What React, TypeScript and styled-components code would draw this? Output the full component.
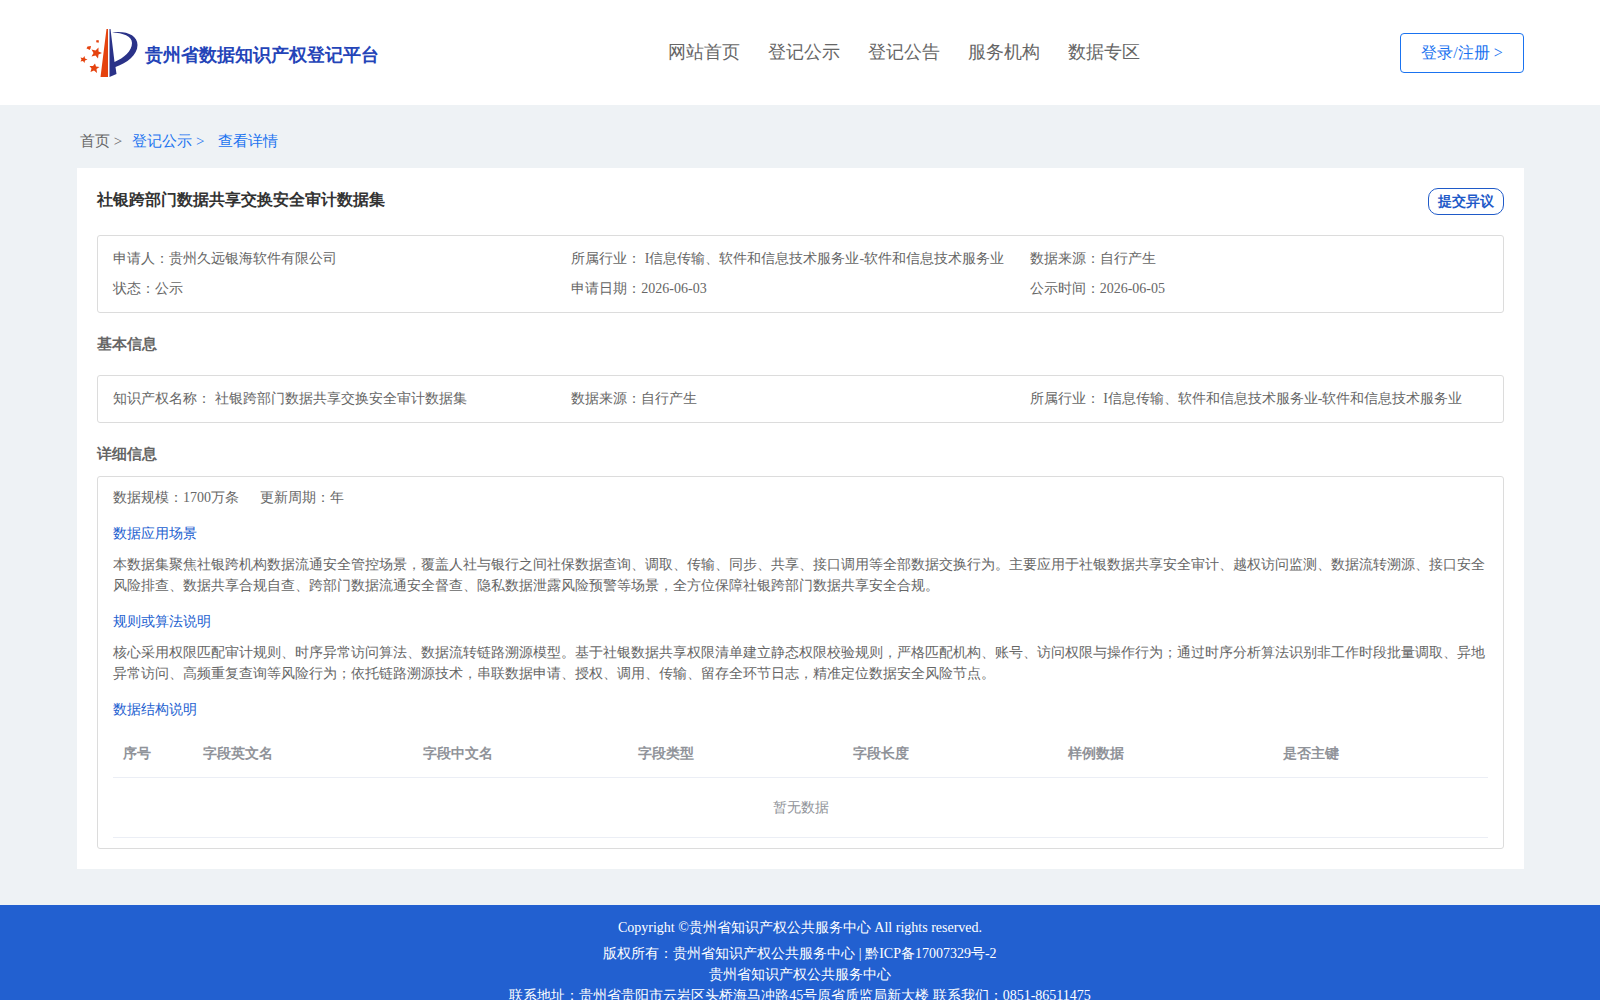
import React from "react";
import styled, { createGlobalStyle } from "styled-components";

const GlobalStyle = createGlobalStyle`
  * { box-sizing: border-box; }
  body {
    margin: 0;
    background: #eef2f5;
    color: #666;
    font-family: "Liberation Serif", serif;
    font-size: 14px;
    line-height: 21px;
  }
  h1, h2, h3, p, dl, dd, dt, ol { margin: 0; padding: 0; }
  a { color: inherit; text-decoration: none; }
  button { font-family: inherit; cursor: pointer; }
`;

const Header = styled.header`
  display: grid;
  grid-template-columns: auto 1fr auto;
  align-items: center;
  height: 105px;
  padding: 0 76px 0 80px;
  background: #fff;
`;

const Brand = styled.a`
  display: flex;
  align-items: center;
  gap: 7px;
  color: #2444b8;
  font-size: 18px;
  font-weight: 700;
  line-height: 24px;
`;

const BrandName = styled.span`
  padding-top: 4px;
`;

const Nav = styled.nav`
  display: flex;
  justify-content: center;
  gap: 28px;
  padding: 0 0 2px 28px;
  font-size: 18px;
  line-height: 24px;
`;

const LoginButton = styled.button`
  min-width: 124px;
  height: 40px;
  padding: 2px 20px 0;
  border: 1px solid #1a73f0;
  border-radius: 4px;
  background: #fff;
  color: #1a73f0;
  font-size: 16px;
`;

const Main = styled.main`
  padding: 0 76px 36px 77px;
`;

const Breadcrumb = styled.nav`
  display: flex;
  gap: 10px;
  align-items: center;
  height: 63px;
  padding: 10px 3px 0;
  font-size: 15px;
`;

const Crumb = styled.a<{ $active?: boolean }>`
  color: ${(p) => (p.$active ? "#1a73f0" : "#666")};
  white-space: pre;
`;

const Card = styled.div`
  padding: 20px;
  background: #fff;
`;

const TitleRow = styled.div`
  display: flex;
  justify-content: space-between;
  align-items: flex-start;
  height: 47px;
`;

const Title = styled.h1`
  color: #333;
  font-size: 16px;
  line-height: 24px;
`;

const ObjectionButton = styled.button`
  height: 27px;
  padding: 0 9px;
  border: 1px solid #1f5ac8;
  border-radius: 10px;
  background: #fff;
  color: #1f5ac8;
  font-size: 14px;
  font-weight: 700;
`;

const Panel = styled.section`
  border: 1px solid #dcdcdc;
  border-radius: 3px;
  padding: 8px 15px;
`;

const InfoGrid = styled.dl`
  display: grid;
  grid-template-columns: repeat(3, 1fr);
  line-height: 30px;
`;

const Field = styled.div`
  display: flex;
  white-space: pre;
`;

const SectionTitle = styled.h2<{ $gap: number }>`
  padding: 20px 0 ${(p) => p.$gap}px;
  font-size: 15px;
  line-height: 22px;
`;

const Detail = styled(Panel)`
  padding: 10px 15px;
`;

const Meta = styled.dl`
  display: flex;
  gap: 21px;
`;

const SubTitle = styled.h3`
  padding: 15px 0 10px;
  color: #2260d0;
  font-size: 14px;
  font-weight: 400;
`;

const Table = styled.table`
  width: 100%;
  border-collapse: separate;
  border-spacing: 0;
  table-layout: fixed;
  color: #909399;
`;

const HeadCell = styled.th<{ $width?: number }>`
  width: ${(p) => (p.$width ? `${p.$width}px` : "auto")};
  height: 48px;
  padding: 0 10px;
  border-bottom: 1px solid #ebeef5;
  text-align: left;
`;

const EmptyCell = styled.td`
  height: 60px;
  padding: 0;
  border-bottom: 1px solid #ebeef5;
  text-align: center;
`;

const Footer = styled.footer`
  padding: 12px 0 20px;
  background: #2260d0;
  color: #fff;
  text-align: center;
`;

const Copyright = styled.p`
  padding-bottom: 5px;
`;

const Logo = () => (
  <svg width="58" height="50" viewBox="0 0 58 50" aria-hidden="true">
    <path d="M26.5 1 L28 1 L28 49 L20.5 49 Z" fill="#e5430f" />
    <path d="M29.5 1 L30.5 1 L34.5 34 C44 30 52 23 52 15 C52 8 43 5 32 4.500 C46 2.500 57.500 7 57.500 17 C57.500 27 47 35 35.500 39 L36.500 46 L29.500 49 Z" fill="#2a3288" />
    <g fill="#e5430f">
      <path d="M18.500 19.500 L18.500 23.500 L22 25 L18.500 26.500 L18 30.500 L15.500 27.500 L11.500 28.500 L13.500 25 L11.500 21.500 L15.500 22.500 Z" />
      <path d="M15 35.500 L16 38.500 L19.500 39 L16.500 41 L17 45 L14 42.500 L10.500 44 L11.500 40.500 L9.500 38 L13 38 Z" />
      <path d="M4.500 28 L5 30.500 L7.500 31.500 L5 32.500 L4.500 35 L3 33 L0.500 33.500 L1.500 31.500 L0.500 29.500 L3 30 Z" />
      <path d="M7.500 18.500 L11 18 L10.500 20.500 L9.500 22 L8 21 L6.500 20.500 Z" />
      <path d="M16 12.500 L18.500 12 L19 14.500 L16.500 14.500 Z" />
    </g>
  </svg>
);

const navItems = ["网站首页", "登记公示", "登记公告", "服务机构", "数据专区"];
const industry = " I信息传输、软件和信息技术服务业-软件和信息技术服务业";

const summary = [
  ["申请人：", "贵州久远银海软件有限公司"],
  ["所属行业：", industry],
  ["数据来源：", "自行产生"],
  ["状态：", "公示"],
  ["申请日期：", "2026-06-03"],
  ["公示时间：", "2026-06-05"],
];

const basics = [
  ["知识产权名称：", " 社银跨部门数据共享交换安全审计数据集"],
  ["数据来源：", "自行产生"],
  ["所属行业：", industry],
];

const columns: { label: string; width?: number }[] = [
  { label: "序号", width: 80 },
  { label: "字段英文名", width: 220 },
  { label: "字段中文名" },
  { label: "字段类型" },
  { label: "字段长度" },
  { label: "样例数据" },
  { label: "是否主键" },
];

const Fields = ({ items }: { items: string[][] }) => (
  <>
    {items.map(([label, value]) => (
      <Field key={label}>
        <dt>{label}</dt>
        <dd>{value}</dd>
      </Field>
    ))}
  </>
);

export default function App() {
  return (
    <>
      <GlobalStyle />
      <Header>
        <Brand href="#">
          <Logo />
          <BrandName>贵州省数据知识产权登记平台</BrandName>
        </Brand>
        <Nav>
          {navItems.map((item) => (
            <a href="#" key={item}>{item}</a>
          ))}
        </Nav>
        <LoginButton type="button">登录/注册 &gt;</LoginButton>
      </Header>
      <Main>
        <Breadcrumb>
          <Crumb href="#">{"首页 >"}</Crumb>
          <Crumb href="#" $active>{"登记公示 > "}</Crumb>
          <Crumb href="#" $active>查看详情</Crumb>
        </Breadcrumb>
        <Card>
          <TitleRow>
            <Title>社银跨部门数据共享交换安全审计数据集</Title>
            <ObjectionButton type="button">提交异议</ObjectionButton>
          </TitleRow>
          <Panel>
            <InfoGrid><Fields items={summary} /></InfoGrid>
          </Panel>
          <SectionTitle $gap={20}>基本信息</SectionTitle>
          <Panel>
            <InfoGrid><Fields items={basics} /></InfoGrid>
          </Panel>
          <SectionTitle $gap={11}>详细信息</SectionTitle>
          <Detail>
            <Meta>
              <Fields items={[["数据规模：", "1700万条"], ["更新周期：", "年"]]} />
            </Meta>
            <SubTitle>数据应用场景</SubTitle>
            <p>本数据集聚焦社银跨机构数据流通安全管控场景，覆盖人社与银行之间社保数据查询、调取、传输、同步、共享、接口调用等全部数据交换行为。主要应用于社银数据共享安全审计、越权访问监测、数据流转溯源、接口安全风险排查、数据共享合规自查、跨部门数据流通安全督查、隐私数据泄露风险预警等场景，全方位保障社银跨部门数据共享安全合规。</p>
            <SubTitle>规则或算法说明</SubTitle>
            <p>核心采用权限匹配审计规则、时序异常访问算法、数据流转链路溯源模型。基于社银数据共享权限清单建立静态权限校验规则，严格匹配机构、账号、访问权限与操作行为；通过时序分析算法识别非工作时段批量调取、异地异常访问、高频重复查询等风险行为；依托链路溯源技术，串联数据申请、授权、调用、传输、留存全环节日志，精准定位数据安全风险节点。</p>
            <SubTitle>数据结构说明</SubTitle>
            <Table>
              <thead>
                <tr>
                  {columns.map((c) => (
                    <HeadCell key={c.label} $width={c.width} scope="col">{c.label}</HeadCell>
                  ))}
                </tr>
              </thead>
              <tbody>
                <tr><EmptyCell colSpan={columns.length}>暂无数据</EmptyCell></tr>
              </tbody>
            </Table>
          </Detail>
        </Card>
      </Main>
      <Footer>
        <Copyright>Copyright ©贵州省知识产权公共服务中心 All rights reserved.</Copyright>
        <p>版权所有：贵州省知识产权公共服务中心 | <a href="#">黔ICP备17007329号-2</a></p>
        <p>贵州省知识产权公共服务中心</p>
        <p>联系地址：贵州省贵阳市云岩区头桥海马冲路45号原省质监局新大楼 联系我们：0851-86511475</p>
      </Footer>
    </>
  );
}
